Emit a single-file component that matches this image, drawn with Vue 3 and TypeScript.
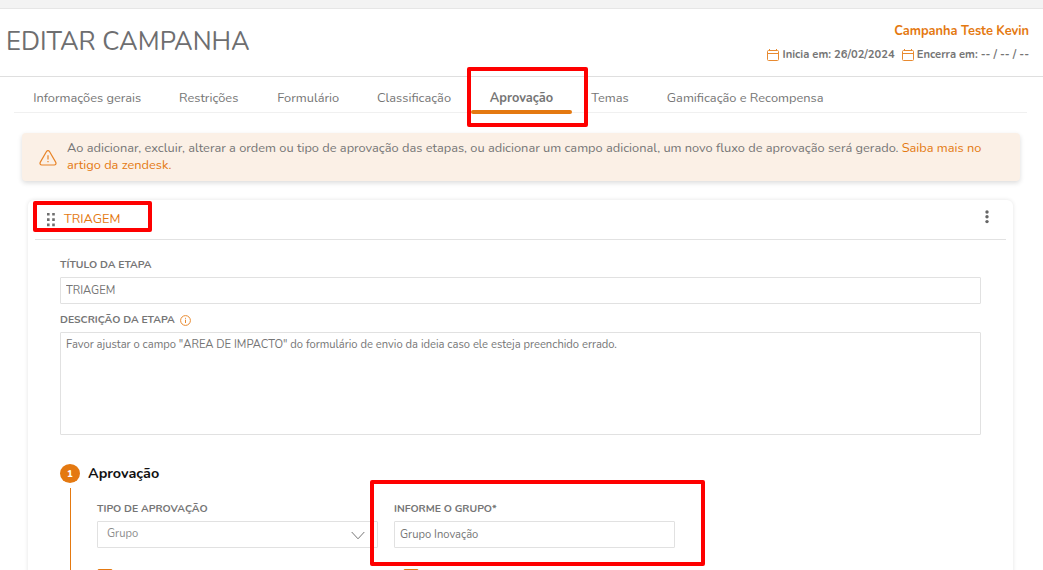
<script setup lang="ts">
import { ref } from 'vue'

interface Tab {
  label: string
  gap: number
}

const tabs: Tab[] = [
  { label: 'Informações gerais', gap: 37.9 },
  { label: 'Restrições', gap: 39 },
  { label: 'Formulário', gap: 37.8 },
  { label: 'Classificação', gap: 38.8 },
  { label: 'Aprovação', gap: 38 },
  { label: 'Temas', gap: 38.2 },
  { label: 'Gamificação e Recompensa', gap: 0 },
]
const activeTab = ref('Aprovação')
const stageTitle = ref('TRIAGEM')
const stageDescription = ref(
  'Favor ajustar o campo "AREA DE IMPACTO" do formulário de envio da ideia caso ele esteja preenchido errado.',
)
const group = ref('Grupo Inovação')
</script>

<template>
  <div class="page">
    <div class="topbar"></div>
    <header class="header">
      <h1>EDITAR CAMPANHA</h1>
      <div class="campaign">
        <div class="campaign-name">Campanha Teste Kevin</div>
        <div class="dates">
          <svg class="calendar" viewBox="0 0 12 12"><path d="M1.500 1.500h9a1 1 0 0 1 1 1v8a1 1 0 0 1-1 1h-9a1 1 0 0 1-1-1v-8a1 1 0 0 1 1-1zM.5 4.500h11M2.500 0v2M9.500 0v2" /></svg>
          <span>Inicia em: 26/02/2024</span>
          <svg class="calendar second" viewBox="0 0 12 12"><path d="M1.500 1.500h9a1 1 0 0 1 1 1v8a1 1 0 0 1-1 1h-9a1 1 0 0 1-1-1v-8a1 1 0 0 1 1-1zM.5 4.500h11M2.500 0v2M9.500 0v2" /></svg>
          <span>Encerra em: -- / -- / --</span>
        </div>
      </div>
    </header>

    <nav class="tabs">
      <a
        v-for="tab in tabs"
        :key="tab.label"
        class="tab"
        :class="{ active: tab.label === activeTab }"
        :style="{ marginRight: tab.gap + 'px' }"
        @click="activeTab = tab.label"
      >{{ tab.label }}</a>
    </nav>

    <div class="alert">
      <svg class="warning" viewBox="0 0 18 16">
        <path d="M7.500 1.500a1.750 1.750 0 0 1 3 0l6.300 10.900a1.750 1.750 0 0 1-1.500 2.600H2.700a1.750 1.750 0 0 1-1.500-2.600z" />
        <path d="M9 5.300v4.200M9 11v1.300" />
      </svg>
      <p>Ao adicionar, excluir, alterar a ordem ou tipo de aprovação das etapas, ou adicionar um campo adicional, um novo fluxo de aprovação será gerado. <a>Saiba mais no<br>artigo da zendesk.</a></p>
    </div>

    <section class="card">
      <div class="card-head">
        <svg class="grip" viewBox="0 0 8 14"><path d="M0 0h2.600v2.600H0zM5.200 0h2.600v2.600H5.200zM0 5.300h2.600v2.600H0zM5.200 5.300h2.600v2.600H5.200zM0 10.600h2.600v2.600H0zM5.200 10.600h2.600v2.600H5.200z" /></svg>
        <span class="card-title">TRIAGEM</span>
        <svg class="more" viewBox="0 0 4 14"><circle cx="2" cy="2" r="1.700" /><circle cx="2" cy="6.800" r="1.700" /><circle cx="2" cy="11.600" r="1.700" /></svg>
      </div>
      <div class="card-body">
        <label>TÍTULO DA ETAPA</label>
        <input v-model="stageTitle" class="field" type="text">
        <label class="desc-label">DESCRIÇÃO DA ETAPA
          <svg class="info" viewBox="0 0 11 11"><circle cx="5.500" cy="5.500" r="4.900" /><path d="M5.500 4.700v3.300M5.500 2.800v1" /></svg>
        </label>
        <textarea v-model="stageDescription" class="field area"></textarea>

        <div class="step">
          <div class="rail">
            <span class="number">1</span>
            <span class="line"></span>
          </div>
          <div class="step-main">
            <h2>Aprovação</h2>
            <div class="grid">
              <div>
                <label>TIPO DE APROVAÇÃO</label>
                <div class="field select">
                  <span>Grupo</span>
                  <svg viewBox="0 0 14 9"><path d="M.7 1l6.300 6.800L13.300 1" /></svg>
                </div>
                <span class="check"></span>
              </div>
              <div>
                <label>INFORME O GRUPO*</label>
                <input v-model="group" class="field" type="text">
                <span class="check offset"></span>
              </div>
            </div>
          </div>
        </div>
      </div>
    </section>

    <div class="mark mark-tab"></div>
    <div class="mark mark-stage"></div>
    <div class="mark mark-group"></div>
  </div>
</template>

<style>
html,
body {
  margin: 0;
  background: #fff;
  overflow: hidden;
}
</style>

<style scoped>
* {
  box-sizing: border-box;
}
.page {
  position: relative;
  width: 1043px;
  height: 570px;
  overflow: hidden;
  font-family: Nunito, Lato, sans-serif;
  font-size: 12.8px;
  color: #757575;
}
.topbar {
  height: 9px;
  background: #f3f3f3;
  border-bottom: 1px solid #e6e6e6;
}
.header {
  height: 68px;
  padding: 0 14px 0 6px;
  display: flex;
  justify-content: space-between;
  border-bottom: 1px solid #dfdfdf;
}
h1 {
  margin: 15px 0 0;
  font-size: 25.6px;
  line-height: 36px;
  font-weight: 400;
  color: #6e6e70;
}
.campaign {
  padding-top: 13px;
  text-align: right;
  font-weight: 700;
}
.campaign-name {
  color: #e47911;
  line-height: 18px;
}
.dates {
  display: flex;
  align-items: center;
  margin-top: 7px;
  font-size: 11.2px;
  line-height: 16px;
}
.calendar {
  width: 12px;
  height: 12px;
  margin: 0 3px 0 0;
  fill: none;
  stroke: #e88a30;
}
.calendar.second {
  margin-left: 7px;
}
.tabs {
  display: flex;
  height: 36px;
  margin: 0 16px 0 14px;
  padding: 11px 0 0 19.2px;
  border-bottom: 1px solid #f0f0f0;
}
.tab {
  position: relative;
  line-height: 20px;
  white-space: nowrap;
}
.tab.active {
  font-weight: 700;
}
.tab.active::after {
  content: '';
  position: absolute;
  left: -19px;
  right: -19px;
  top: 22px;
  height: 4px;
  border-radius: 2px;
  background: #e47911;
}
.alert {
  display: flex;
  width: 998px;
  height: 48px;
  margin: 20px 0 0 22px;
  padding: 7px 0 0 17px;
  border-radius: 4px;
  background: #fbf0e6;
  box-shadow: 0 2px 5px rgba(0, 0, 0, 0.14);
}
.warning {
  width: 18px;
  height: 16px;
  margin-top: 10px;
  fill: none;
  stroke: #e88428;
  stroke-width: 1.2;
}
.alert p {
  margin: 0 0 0 10px;
  line-height: 17px;
  white-space: nowrap;
}
.alert a {
  color: #e47911;
}
.card {
  width: 985px;
  height: 420px;
  margin: 19px 0 0 28px;
  padding: 0 7px;
  border-radius: 6px;
  box-shadow: 0 0 4px rgba(0, 0, 0, 0.11);
}
.card-head {
  display: flex;
  height: 40px;
  padding: 0 17px 0 12px;
  border-bottom: 1px solid #e2e2e2;
}
.grip {
  width: 8px;
  height: 14px;
  margin-top: 13px;
  fill: #6f6f6f;
}
.card-title {
  margin: 10px 0 0 9px;
  line-height: 18px;
  color: #e47911;
}
.more {
  width: 4px;
  height: 14px;
  margin: 10px 0.5px 0 auto;
  fill: #666;
}
.card-body {
  padding: 17px 25px 0;
}
label {
  display: block;
  font-size: 10.4px;
  line-height: 16px;
  font-weight: 700;
}
.field {
  display: block;
  width: 100%;
  height: 27px;
  margin: 4px 0 0;
  padding: 0 5px;
  border: 1px solid #e1e1e1;
  border-radius: 1px;
  outline: none;
  resize: none;
  background: #fff;
  font-family: inherit;
  font-size: 11.2px;
  line-height: 15px;
  color: #757575;
}
.desc-label {
  display: flex;
  margin-top: 8px;
}
.info {
  width: 11px;
  height: 11px;
  margin: 3px 0 0 5px;
  fill: none;
  stroke: #e88a30;
}
.area {
  height: 103px;
  padding-top: 4px;
}
.step {
  display: flex;
  margin-top: 29px;
}
.rail {
  display: flex;
  flex-direction: column;
  align-items: center;
  width: 20px;
  height: 150px;
}
.number {
  width: 20px;
  height: 19px;
  border-radius: 50%;
  background: #e47911;
  color: #fff;
  font-size: 9.6px;
  line-height: 19px;
  font-weight: 800;
  text-align: center;
}
.line {
  flex: 1;
  width: 1px;
  margin-top: 5px;
  background: #e47911;
}
.step-main {
  padding-left: 8px;
}
h2 {
  margin: 0;
  font-size: 14.4px;
  line-height: 19px;
  font-weight: 700;
  color: #111;
}
.grid {
  display: grid;
  grid-template-columns: 281px 281px;
  column-gap: 16px;
  margin: 18px 0 0 9px;
}
.select {
  display: flex;
  justify-content: space-between;
  padding: 4px 12px 0 9px;
  color: #8c8c8c;
}
.select svg {
  width: 14px;
  height: 9px;
  margin-top: 5px;
  fill: none;
  stroke: #777;
}
.check {
  display: block;
  width: 16px;
  height: 16px;
  margin-top: 21px;
  border: 1px solid #e47911;
  border-radius: 2px;
}
.check.offset {
  margin-left: 9px;
}
.mark {
  position: absolute;
  border: 4px solid #fe0000;
  border-radius: 2px;
}
.mark-tab {
  left: 467px;
  top: 67px;
  width: 121px;
  height: 60px;
}
.mark-stage {
  left: 33px;
  top: 201px;
  width: 119px;
  height: 31px;
}
.mark-group {
  left: 370px;
  top: 480px;
  width: 335px;
  height: 86px;
}
</style>
